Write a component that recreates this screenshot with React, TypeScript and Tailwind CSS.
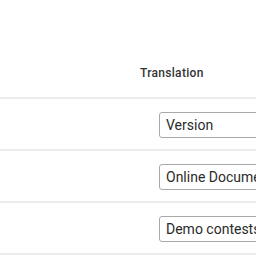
import React from "react";

const rows = ["Version", "Online Documentation", "Demo contests"];

const TranslationRow: React.FC<{ value: string }> = ({ value }) => {
  return (
    <div className="flex h-[52px] border-b-2 border-[#ececec] pl-[159px] pt-[13px]">
      <input
        readOnly
        value={value}
        className="h-[26px] w-[200px] shrink-0 rounded-[3px] border border-[#a9a9a9] bg-white px-[6px] text-[14px] text-[#2b2b2b] outline-none"
      />
    </div>
  );
};

export default function App() {
  return (
    <div className="h-[256px] w-[256px] overflow-hidden bg-white font-['Roboto',sans-serif]">
      {/* header */}
      <div className="flex h-[99px] items-start border-b-2 border-[#ececec] pl-[140px] pt-[64px]">
        <span className="text-[12px] font-medium tracking-[0.3px] text-[#333]">Translation</span>
      </div>
      {rows.map((r) => (
        <TranslationRow key={r} value={r} />
      ))}
    </div>
  );
}
